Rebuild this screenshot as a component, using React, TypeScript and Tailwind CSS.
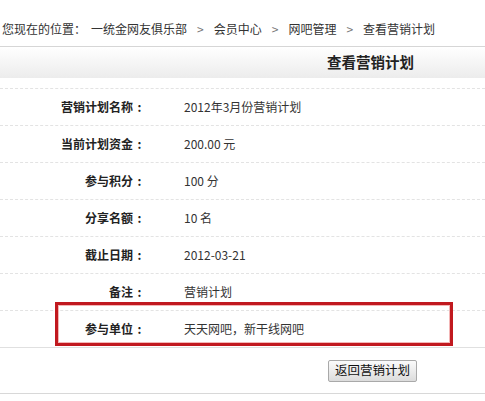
import React from "react";

const rows: { label: string; value: string }[] = [
  { label: "营销计划名称", value: "2012年3月份营销计划" },
  { label: "当前计划资金", value: "200.00 元" },
  { label: "参与积分", value: "100 分" },
  { label: "分享名额", value: "10 名" },
  { label: "截止日期", value: "2012-03-21" },
  { label: "备注", value: "营销计划" },
];

function Label({ text }: { text: string }) {
  return (
    <div className="w-[146px] flex justify-end font-bold text-[#222]">
      <span>{text}</span>
      <span className="inline-block w-[13px] text-center">:</span>
    </div>
  );
}

export default function App() {
  const font = { fontFamily: '"Noto Sans CJK SC", "Liberation Sans", sans-serif' };
  return (
    <div className="w-[485px] h-[401px] bg-white text-[#333] overflow-hidden" style={font}>
      <div className="pt-[22px] pb-[10px] pl-[2px] text-[12px] leading-[14px] whitespace-nowrap flex">
        <span>您现在的位置：</span>
        <span className="ml-[5px]">一统金网友俱乐部</span>
        <span className="mx-[10px] text-[#777]">&gt;</span>
        <span>会员中心</span>
        <span className="mx-[10px] text-[#777]">&gt;</span>
        <span>网吧管理</span>
        <span className="mx-[10px] text-[#777]">&gt;</span>
        <span>查看营销计划</span>
      </div>
      <div className="border-t border-[#d6d6d6] h-[32px] bg-gradient-to-b from-[#ffffff] to-[#ececec] flex items-center pl-[327px]">
        <span className="text-[14.5px] font-bold text-[#222] leading-none">查看营销计划</span>
      </div>
      <div className="h-[10px]" />
      <div className="relative border-t border-dashed border-[#e3e3e3]">
        {rows.map((r) => (
          <div key={r.label} className="h-[37px] flex items-center border-b border-dashed border-[#e3e3e3] text-[12px]">
            <Label text={r.label} />
            <div className="pl-[38px]">{r.value}</div>
          </div>
        ))}
        <div className="relative h-[37px] flex items-center border-b border-[#e0e0e0] text-[12px]">
          <Label text="参与单位" />
          <div className="pl-[38px]">天天网吧，新干线网吧</div>
          <div className="absolute left-[55px] top-[-9px] w-[398px] h-[44px] border-[3px] border-[#c1191f] shadow-[inset_0_0_0_1px_#f3b6b6]" />
        </div>
      </div>
      <div className="h-[46px] border-b border-[#d8d8d8] flex items-center pl-[328px]">
        <button
          className="w-[89px] h-[22px] border border-[#a9a9a9] rounded-[2px] bg-gradient-to-b from-[#fbfbfb] to-[#dcdcdc] text-[12.5px] text-[#111] leading-none flex items-center justify-center"
          style={font}
        >
          返回营销计划
        </button>
      </div>
    </div>
  );
}
